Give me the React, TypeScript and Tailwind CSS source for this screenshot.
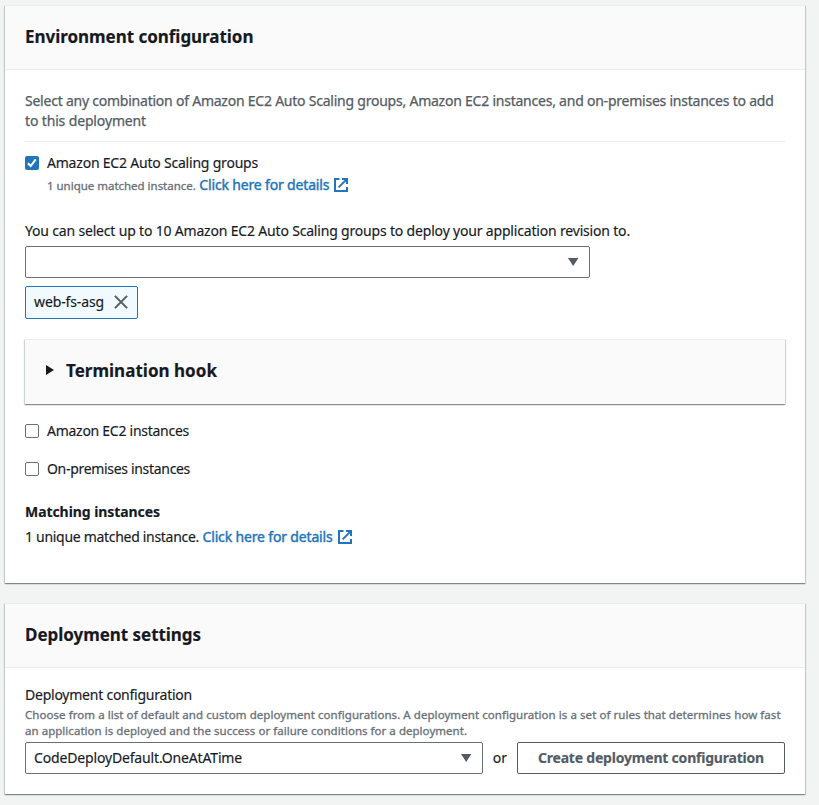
import type { ReactNode } from "react";

function Card({ title, children, className }: { title: ReactNode; children: ReactNode; className: string }) {
  return (
    <section
      className={`flex flex-col w-[800px] border-t border-[#eaeded] bg-white shadow-[0_1px_1px_0_rgba(0,28,36,0.3),1px_1px_1px_0_rgba(0,28,36,0.15),-1px_1px_1px_0_rgba(0,28,36,0.15)] ${className}`}
    >
      <header className="flex h-[64px] shrink-0 items-center border-b border-[#eaeded] bg-[#fafafa] px-5 pb-0.5">
        {title}
      </header>
      <div className="px-5">{children}</div>
    </section>
  );
}

function ExternalIcon() {
  return (
    <svg className="ml-[5px] size-[14px] shrink-0" viewBox="0 0 14 14" fill="none" stroke="#2474bb" strokeWidth="2">
      <path d="M5.5 1H1v12h12V9" />
      <path d="M8 1h5v5" />
      <path d="M12.6 1.4 4.6 9.4" />
    </svg>
  );
}

function DetailsLink() {
  return (
    <a className="flex items-center text-[14px] tracking-[-0.16px] text-[#2074ba] [-webkit-text-stroke:0.4px_#2074ba]" href="#details">
      Click here for details
      <ExternalIcon />
    </a>
  );
}

function Caret() {
  return (
    <svg className="h-[8px] w-[11px]" viewBox="0 0 11 8" fill="#545b64">
      <path d="M0 0h10.4L5.2 8z" />
    </svg>
  );
}

function Checkbox({ checked = false }: { checked?: boolean }) {
  return checked ? (
    <span className="flex size-[14px] items-center justify-center rounded-[2px] bg-[#2474bb]">
      <svg className="size-[14px]" viewBox="0 0 14 14" fill="none" stroke="#fff" strokeWidth="2">
        <path d="M2.8 7.2 5.7 10l5-6.6" />
      </svg>
    </span>
  ) : (
    <span className="size-[14px] rounded-[2px] border border-[#687078] bg-white" />
  );
}

export default function App() {
  return (
    <main className="h-[805px] overflow-hidden whitespace-nowrap bg-[#f2f3f3] pt-[5px] pl-[5px] font-['Noto_Sans','Open_Sans',sans-serif] text-[14px] leading-5 text-[#16191f] [-webkit-text-stroke-width:0.15px]">
      <Card className="h-[578px]" title={<h2 className="text-[17px] font-bold tracking-[-0.035px]">Environment configuration</h2>}>
        <div className="mt-[21px] border-b border-[#eaeded] pb-[10px] text-[#545b64] [-webkit-text-stroke-width:0.25px]">
          <p className="tracking-[-0.23px]">
            Select any combination of Amazon EC2 Auto Scaling groups, Amazon EC2 instances, and on-premises instances to add
          </p>
          <p className="tracking-[-0.143px]">to this deployment</p>
        </div>

        <div className="mt-[11px] flex items-center gap-2">
          <Checkbox checked />
          <span className="tracking-[-0.207px]">Amazon EC2 Auto Scaling groups</span>
        </div>
        <div className="mt-[2px] flex h-5 items-center gap-[3.5px] pl-[22px]">
          <span className="pt-[2px] text-[11.5px] tracking-[-0.02px] text-[#687078] [-webkit-text-stroke-width:0.3px]">1 unique matched instance.</span>
          <DetailsLink />
        </div>

        <p className="mt-[26px] tracking-[-0.181px]">
          You can select up to 10 Amazon EC2 Auto Scaling groups to deploy your application revision to.
        </p>
        <div className="mt-[5px] flex h-8 w-[565px] items-center justify-end rounded-[2px] border border-[#687078] pr-[10px]">
          <Caret />
        </div>
        <div className="mt-2 flex h-[33px] w-[113px] items-center rounded-[2px] border border-[#2474bb] bg-[#f1faff] pl-2">
          <span className="pb-px tracking-[-0.122px]">web-fs-asg</span>
          <svg className="mb-px ml-[10px] size-[14px]" viewBox="0 0 14 14" fill="none" stroke="#545b64" strokeWidth="2">
            <path d="m.9.9 12.2 12.2M13.1.9.9 13.1" />
          </svg>
        </div>

        <div className="mt-[20px] flex h-[65px] items-center border-t border-[#eaeded] bg-[#fafafa] pl-[21px] pb-[2px] shadow-[0_1px_1px_0_rgba(0,28,36,0.3),1px_1px_1px_0_rgba(0,28,36,0.15),-1px_1px_1px_0_rgba(0,28,36,0.15)]">
          <svg className="mb-[2px] h-[10px] w-[8px]" viewBox="0 0 8 10" fill="#16191f">
            <path d="M0 0v10l8-5z" />
          </svg>
          <h3 className="ml-3 text-[17px] font-bold tracking-[0.02px]">Termination hook</h3>
        </div>

        <div className="mt-[17px] flex items-center gap-2">
          <Checkbox />
          <span className="tracking-[-0.268px]">Amazon EC2 instances</span>
        </div>
        <div className="mt-[18px] flex items-center gap-2">
          <Checkbox />
          <span className="tracking-[-0.314px]">On-premises instances</span>
        </div>

        <h4 className="mt-[23px] font-bold tracking-[-0.069px]">Matching instances</h4>
        <div className="mt-[5px] flex items-center gap-[3.5px]">
          <span className="tracking-[-0.299px]">1 unique matched instance.</span>
          <DetailsLink />
        </div>
      </Card>

      <Card className="mt-5 h-[191px]" title={<h2 className="text-[17px] font-bold tracking-[-0.04px]">Deployment settings</h2>}>
        <p className="mt-[17px] tracking-[-0.236px]">Deployment configuration</p>
        <div className="mt-[2px] text-[11.5px] leading-4 text-[#687078] [-webkit-text-stroke-width:0.3px]">
          <p className="tracking-[0.06px]">
            Choose from a list of default and custom deployment configurations. A deployment configuration is a set of rules that determines how fast
          </p>
          <p className="tracking-[0.034px]">
            an application is deployed and the success or failure conditions for a deployment.
          </p>
        </div>
        <div className="mt-[3px] flex items-center">
          <div className="flex h-8 w-[458px] items-center justify-between rounded-[2px] border border-[#687078] pr-[10px] pl-2">
            <span className="tracking-[-0.16px]">CodeDeployDefault.OneAtATime</span>
            <Caret />
          </div>
          <span className="w-[34px] text-center">or</span>
          <button className="h-8 w-[268px] rounded-[2px] border border-[#545b64] bg-white font-bold tracking-[-0.206px] text-[#545b64]">
            Create deployment configuration
          </button>
        </div>
      </Card>
    </main>
  );
}
